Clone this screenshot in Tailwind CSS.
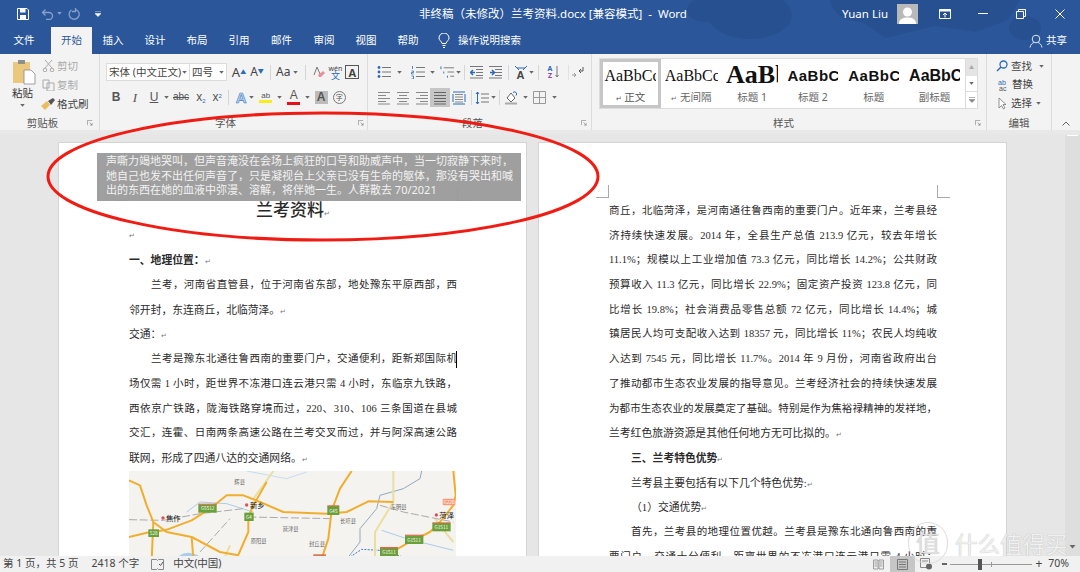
<!DOCTYPE html>
<html lang="zh">
<head>
<meta charset="utf-8">
<script src="https://cdn.jsdelivr.net/npm/@tailwindcss/browser@4"></script>
<title>Word</title>
</head>
<body class="m-0 overflow-hidden">
<svg class="hidden" width="0" height="0">
  <symbol id="dd" viewBox="0 0 6 4"><path d="M0 0h6L3 3.5z" fill="#666"/></symbol>
  <symbol id="launch" viewBox="0 0 7 7"><path d="M.5 6V.5H6M3 3l3 3M6 3.5V6H3.5" fill="none" stroke="#888" stroke-width=".8"/></symbol>
  <symbol id="bul" viewBox="0 0 14 14"><g fill="#2b6cb8"><circle cx="2" cy="2.5" r="1.4"/><circle cx="2" cy="7" r="1.4"/><circle cx="2" cy="11.5" r="1.4"/></g><path d="M5 2.5h9M5 7h9M5 11.5h9" stroke="#777" stroke-width="1"/></symbol>
  <symbol id="num" viewBox="0 0 14 14"><path d="M1.500 1v3M.5 6h2v1.500h-2v1.500h2M.5 11h2v3h-2" fill="none" stroke="#2b6cb8" stroke-width=".8"/><path d="M5 2.500h9M5 7h9M5 11.500h9" stroke="#777"/></symbol>
  <symbol id="mlist" viewBox="0 0 16 14"><path d="M1 1v3M4 6.500v2M8 11v2" stroke="#2b6cb8"/><path d="M4 2.500h11M8 7h7M11 11.500h4" stroke="#777"/></symbol>
  <symbol id="ind-l" viewBox="0 0 14 14"><path d="M0 1.500h13M6 4.500h7M6 7.500h7M6 10.500h7M0 13h13" stroke="#777"/><path d="M5 7.500H1M3 5L.5 7.500 3 10" fill="none" stroke="#2b6cb8" stroke-width="1.500"/></symbol>
  <symbol id="ind-r" viewBox="0 0 14 14"><path d="M0 1.500h13M6 4.500h7M6 7.500h7M6 10.500h7M0 13h13" stroke="#777"/><path d="M1 7.500h4M3 5l2.500 2.500L3 10" fill="none" stroke="#2b6cb8" stroke-width="1.500"/></symbol>
  <symbol id="al-l" viewBox="0 0 14 14"><path d="M1 1.500h12M1 4.500h8M1 7.500h12M1 10.500h8M1 13h12" stroke="#888"/></symbol>
  <symbol id="al-c" viewBox="0 0 14 14"><path d="M1 1.500h12M3 4.500h8M1 7.500h12M3 10.500h8M1 13h12" stroke="#888"/></symbol>
  <symbol id="al-r" viewBox="0 0 14 14"><path d="M1 1.500h12M5 4.500h8M1 7.500h12M5 10.500h8M1 13h12" stroke="#888"/></symbol>
  <symbol id="al-j" viewBox="0 0 14 14"><path d="M1 1.500h12M1 4.500h12M1 7.500h12M1 10.500h12M1 13h12" stroke="#666"/></symbol>
</svg>

<div class="relative flex h-[572px] w-[1080px] flex-col overflow-hidden bg-[#e6e6e6] font-['Noto_Sans','Noto_Sans_CJK_SC',sans-serif] text-[#444]">

  <!-- blue header -->
  <header class="relative h-[54px] shrink-0 overflow-hidden bg-[#2b579a] text-white">
    <svg class="absolute top-0 left-[680px]" width="400" height="54" viewBox="0 0 400 54"><g fill="#275090"><ellipse cx="25" cy="10" rx="18" ry="12"/><ellipse cx="70" cy="15" rx="42" ry="24"/><path d="M150 0h190l-12 20-32 12-42-6-48 12-24-16q-28-2-32-22z"/><ellipse cx="345" cy="28" rx="16" ry="12"/></g></svg>
    <!-- title bar -->
    <div class="relative flex h-[27px] items-center">
      <svg class="ml-[17px]" width="12" height="12" viewBox="0 0 12 12"><path d="M.5.500h9.500l1.500 1.500v9.500H.5z" fill="none" stroke="#fff"/><path d="M3 1h5.500v3.500H3zM3 7h6v4.500H3z" fill="#fff"/></svg>
      <svg class="ml-[12px]" width="13" height="12" viewBox="0 0 13 12"><path d="M4.500 1.500L1.500 4.500l3 3M1.500 4.500H8a3.500 3.500 0 0 1 0 7H5" fill="none" stroke="#86a1c9" stroke-width="1.300"/></svg>
      <svg class="ml-[3px]" width="5" height="3" viewBox="0 0 6 4"><path d="M0 0h6L3 3.500z" fill="#86a1c9"/></svg>
      <svg class="ml-[6px]" width="12" height="12" viewBox="0 0 12 12"><path d="M3.500 2A5 5 0 1 0 7 1.300M7.500 0v3.500H4" fill="none" stroke="#86a1c9" stroke-width="1.300"/></svg>
      <svg class="ml-[15px]" width="6" height="6" viewBox="0 0 6 6"><path d="M0 0h6M0 2.500h6L3 5.500z" stroke="#dfe7f2" stroke-width=".8" fill="#fff"/></svg>
      <span class="ml-[318px] text-[11.5px] whitespace-nowrap">非终稿（未修改）兰考资料.docx [兼容模式]&nbsp; -&nbsp; Word</span>
      <span class="ml-auto text-[11.5px]">Yuan Liu</span>
      <div class="ml-[9px] flex h-[20px] w-[21px] items-end justify-center overflow-hidden bg-[#b9b9b9]">
        <svg width="19" height="18" viewBox="0 0 19 18"><circle cx="9.500" cy="6" r="4.500" fill="#fff"/><path d="M1 18c0-5 4-6.500 8.500-6.500S18 13 18 18z" fill="#fff"/></svg>
      </div>
      <svg class="ml-[21px]" width="12" height="10" viewBox="0 0 12 10"><path d="M.5.500h11v9H.5z" fill="none" stroke="#fff"/><path d="M.5.500h11v2H.5z" fill="#fff"/><path d="M6 8.500V4M4 6l2-2 2 2" fill="none" stroke="#fff"/></svg>
      <span class="ml-[27px] h-px w-[10px] bg-white"></span>
      <svg class="ml-[28px]" width="10" height="10" viewBox="0 0 10 10"><path d="M.5 2.500h7v7h-7zM2.500 2.500v-2h7v7h-2" fill="none" stroke="#fff"/></svg>
      <svg class="mr-[15px] ml-[29px]" width="10" height="10" viewBox="0 0 10 10"><path d="M.5.500l9 9M9.500.500l-9 9" stroke="#fff"/></svg>
    </div>
    <!-- tabs -->
    <nav class="relative flex h-[27px] items-center text-[10.5px]">
      <span class="ml-[4px] w-[40px] text-center">文件</span>
      <span class="ml-[7px] flex h-full w-[41px] items-center justify-center bg-[#f3f3f3] text-[#2b579a]">开始</span>
      <span class="w-[42px] text-center">插入</span>
      <span class="w-[42px] text-center">设计</span>
      <span class="w-[42px] text-center">布局</span>
      <span class="w-[42px] text-center">引用</span>
      <span class="w-[43px] text-center">邮件</span>
      <span class="w-[42px] text-center">审阅</span>
      <span class="w-[42px] text-center">视图</span>
      <span class="w-[42px] text-center">帮助</span>
      <svg class="ml-[9px]" width="12" height="15" viewBox="0 0 12 15"><path d="M4 10.500C3.500 8 1 7.500 1 5a5 5 0 0 1 10 0c0 2.500-2.500 3-3 5.500zM4.500 12.500h3M5 14.500h2" fill="none" stroke="#fff"/></svg>
      <span class="ml-[8px]">操作说明搜索</span>
      <svg class="ml-auto" width="14" height="14" viewBox="0 0 14 14"><circle cx="7" cy="5" r="3.800" fill="none" stroke="#dfe7f2"/><path d="M1 13.500c.5-3 2.500-4.500 4-5M13 13.500c-.5-3-2.500-4.500-4-5" fill="none" stroke="#dfe7f2"/></svg>
      <span class="mr-[13px] ml-[3px]">共享</span>
    </nav>
  </header>

  <!-- ribbon -->
  <section class="flex h-[76px] shrink-0 bg-[#f3f3f3] text-[10.5px] leading-none">
    <!-- clipboard -->
    <div class="relative flex w-[100px] shrink-0 flex-col border-r border-[#dcdcdc]">
      <div class="flex h-[62px] pl-[12px]">
        <div class="flex w-[30px] flex-col items-start pt-[5px]">
          <svg width="25" height="26" viewBox="0 0 25 26"><path d="M1 3h17v21H1z" fill="#eac97e"/><path d="M6 1h7v4H6z" fill="#8f8f8f"/><path d="M12 11h7l4 4v10H12z" fill="#fff" stroke="#888" stroke-width=".8"/></svg>
          <span class="mt-[3px] text-[#333]">粘贴</span>
          <svg class="mt-[5px] ml-[8px]" width="5" height="3"><use href="#dd"/></svg>
        </div>
        <div class="flex flex-col gap-[7px] pt-[6px] text-[#aaa]">
          <span class="flex items-center gap-[2px]"><svg width="13" height="12" viewBox="0 0 13 12"><path d="M3 0l7 8M10 0L3 8" stroke="#aaa"/><circle cx="3" cy="10" r="1.800" fill="none" stroke="#aaa"/><circle cx="10" cy="10" r="1.800" fill="none" stroke="#aaa"/></svg>剪切</span>
          <span class="flex items-center gap-[2px]"><svg width="13" height="12" viewBox="0 0 13 12"><path d="M1 1h6v8H1zM5 4h7v8H5z" fill="#f3f3f3" stroke="#aaa"/></svg>复制</span>
          <span class="-ml-[1px] flex items-center gap-[2px] text-[#444]"><svg width="14" height="12" viewBox="0 0 14 12"><path d="M0 8l6-5 3 4-5 5z" fill="#e9bd62"/><path d="M7 3l5-3 2 2-4 5z" fill="#555"/></svg>格式刷</span>
        </div>
      </div>
      <div class="flex h-[14px] items-center justify-center pr-[14px] text-[#555]">剪贴板</div>
      <svg class="absolute right-[6px] bottom-[4px]" width="6" height="6"><use href="#launch"/></svg>
    </div>

    <!-- font -->
    <div class="relative flex w-[268px] shrink-0 flex-col border-r border-[#dcdcdc]">
      <div class="flex h-[62px] flex-col">
        <div class="mt-[9px] flex h-[18px] items-center pl-[6px]">
          <span class="flex h-[18px] w-[84px] items-center justify-between border border-[#dcdcdc] bg-white px-[2px] text-[#444]">宋体 (中文正文)<svg width="5" height="3"><use href="#dd"/></svg></span>
          <span class="-ml-px flex h-[18px] w-[38px] items-center justify-between border border-[#dcdcdc] bg-white px-[2px]">四号<svg width="5" height="3"><use href="#dd"/></svg></span>
          <span class="ml-[3px] w-[18px] text-center text-[13px]">A<sup class="text-[6px] text-[#2b6cb8]">▲</sup></span>
          <span class="w-[18px] text-center text-[12px]">A<sup class="text-[6px] text-[#2b6cb8]">▼</sup></span>
          <span class="ml-[4px] h-[15px] w-px bg-[#d5d5d5]"></span>
          <span class="ml-[5px] text-[12px]">Aa</span>
          <svg class="ml-[3px]" width="5" height="3"><use href="#dd"/></svg>
          <span class="ml-[7px] h-[15px] w-px bg-[#d5d5d5]"></span>
          <svg class="ml-[7px]" width="12" height="12" viewBox="0 0 12 12"><path d="M1 9L4 1l3 7" fill="none" stroke="#777"/><path d="M5 9l5-4 2 2-4 4H6z" fill="#ec8f9b"/></svg>
          <span class="ml-[3px] flex w-[14px] flex-col items-center text-[7px] leading-[7px] text-[#2b6cb8]"><span class="text-[#444]">wén</span><span class="text-[9px]">文</span></span>
          <span class="ml-[3px] flex h-[14px] w-[14px] items-center justify-center border border-[#555] text-[11px] font-bold">A</span>
        </div>
        <div class="mt-[7px] flex h-[18px] items-center pl-[11px] font-['Liberation_Sans',sans-serif] text-[12px] text-[#555]">
          <span class="w-[10px] text-center font-bold">B</span>
          <span class="ml-[9px] w-[10px] text-center font-['Liberation_Serif',serif] text-[13px] italic">I</span>
          <span class="ml-[9px] w-[10px] text-center underline">U</span>
          <svg class="ml-[5px]" width="5" height="3"><use href="#dd"/></svg>
          <span class="ml-[4px] text-[10px] line-through">abc</span>
          <span class="ml-[7px]">x<sub class="text-[6px] text-[#2b6cb8]">2</sub></span>
          <span class="ml-[7px]">x<sup class="text-[6px] text-[#2b6cb8]">2</sup></span>
          <span class="ml-[6px] h-[15px] w-px bg-[#d5d5d5]"></span>
          <span class="ml-[7px] text-[15px] font-bold text-[#b8d2ee] [-webkit-text-stroke:.6px_#3d7cc4]">A</span>
          <svg class="ml-[2px]" width="5" height="3"><use href="#dd"/></svg>
          <span class="ml-[5px] flex w-[14px] flex-col items-center text-[8px] leading-[9px]">ab<span class="h-[3px] w-[13px] bg-[#f6ee1c]"></span></span>
          <svg class="ml-[4px]" width="5" height="3"><use href="#dd"/></svg>
          <span class="ml-[5px] flex w-[14px] flex-col items-center text-[12px] leading-[11px]">A<span class="mt-[1px] h-[3px] w-[13px] bg-[#e8111a]"></span></span>
          <svg class="ml-[4px]" width="5" height="3"><use href="#dd"/></svg>
          <span class="ml-[5px] flex h-[13px] w-[13px] items-center justify-center bg-[#bcbcbc] font-bold">A</span>
          <span class="ml-[5px] flex h-[13px] w-[13px] items-center justify-center rounded-full border border-[#777] font-['Noto_Sans_CJK_SC',sans-serif] text-[7px]">字</span>
        </div>
      </div>
      <div class="flex h-[14px] items-center justify-center pr-[16px] text-[#555]">字体</div>
      <svg class="absolute right-[3px] bottom-[4px]" width="6" height="6"><use href="#launch"/></svg>
    </div>

    <!-- paragraph -->
    <div class="relative flex w-[224px] shrink-0 flex-col border-r border-[#dcdcdc]">
      <div class="flex h-[62px] flex-col">
        <div class="mt-[11px] flex h-[14px] items-center pl-[9px]">
          <svg width="14" height="14"><use href="#bul"/></svg>
          <svg class="ml-[6px]" width="5" height="3"><use href="#dd"/></svg>
          <svg class="ml-[9px]" width="14" height="14"><use href="#num"/></svg>
          <svg class="ml-[5px]" width="5" height="3"><use href="#dd"/></svg>
          <svg class="ml-[5px]" width="15" height="14"><use href="#mlist"/></svg>
          <svg class="ml-[1px]" width="5" height="3"><use href="#dd"/></svg>
          <span class="ml-[3px] h-[15px] w-px bg-[#d5d5d5]"></span>
          <svg class="ml-[5px]" width="14" height="14"><use href="#ind-l"/></svg>
          <svg class="ml-[5px]" width="14" height="14"><use href="#ind-r"/></svg>
          <span class="ml-[5px] h-[15px] w-px bg-[#d5d5d5]"></span>
          <svg class="ml-[5px]" width="14" height="14" viewBox="0 0 14 14"><path d="M3 3l8 0M1 1l4 4M13 1L9 5" stroke="#2b6cb8"/><text x="2.500" y="13.500" font-size="11" font-weight="700" fill="#444" font-family="Liberation Sans">A</text></svg>
          <svg class="ml-[1px]" width="5" height="3"><use href="#dd"/></svg>
          <span class="ml-[4px] h-[15px] w-px bg-[#d5d5d5]"></span>
          <span class="ml-[6px] flex w-[10px] flex-col items-center text-[7px] leading-[7px] font-bold"><span class="text-[#2b6cb8]">A</span><span class="text-[#8e44ad]">Z</span></span>
          <svg width="4" height="14" viewBox="0 0 4 14"><path d="M2 1v11M.5 10l1.500 2 1.500-2" fill="none" stroke="#777"/></svg>
          <span class="ml-[9px] h-[15px] w-px bg-[#e2e2e2]"></span>
          <svg class="ml-[2px]" width="14" height="12" viewBox="0 0 14 12"><path d="M12 1v4H8M8 5l2-2M8 5l2 2" fill="none" stroke="#555"/><path d="M1 9h4M3 7l2 2-2 2" fill="none" stroke="#999"/></svg>
        </div>
        <div class="mt-[9px] flex h-[19px] items-center pl-[9px]">
          <svg width="14" height="14"><use href="#al-l"/></svg>
          <svg class="ml-[5px]" width="14" height="14"><use href="#al-c"/></svg>
          <svg class="ml-[5px]" width="14" height="14"><use href="#al-r"/></svg>
          <span class="ml-[1px] flex h-[19px] w-[20px] items-center justify-center bg-[#c6c6c6]"><svg width="14" height="14"><use href="#al-j"/></svg></span>
          <svg class="ml-[2px]" width="14" height="14" viewBox="0 0 14 14"><path d="M1 1h12M1 13h12" stroke="#2b6cb8"/><path d="M3 3.500h8M3 6h8M3 8.500h8M3 11h8" stroke="#888"/><path d="M1 3v8M13 3v8" stroke="#2b6cb8"/></svg>
          <span class="ml-[5px] h-[15px] w-px bg-[#d5d5d5]"></span>
          <svg class="ml-[3px]" width="14" height="14" viewBox="0 0 14 14"><path d="M2.500 1v12M1 3l1.500-2L4 3M1 11l1.500 2L4 11" fill="none" stroke="#2b6cb8"/><path d="M6 3h8M6 7h8M6 11h8" stroke="#777"/></svg>
          <svg class="ml-[2px]" width="5" height="3"><use href="#dd"/></svg>
          <span class="ml-[3px] h-[15px] w-px bg-[#d5d5d5]"></span>
          <svg class="ml-[4px]" width="14" height="14" viewBox="0 0 14 14"><path d="M3 7l4-5 4 5-4 4z" fill="#fff" stroke="#666"/><path d="M9 1.500a2 2 0 0 1 3 3" fill="none" stroke="#2b6cb8"/><path d="M1 12.500h12" stroke="#aaa" stroke-width="2"/></svg>
          <svg class="ml-[5px]" width="5" height="3"><use href="#dd"/></svg>
          <svg class="ml-[5px]" width="13" height="13" viewBox="0 0 13 13"><path d="M.5.500h12v12H.5zM6.500.500v12M.5 6.500h12" fill="none" stroke="#999"/></svg>
          <svg class="ml-[6px]" width="5" height="3"><use href="#dd"/></svg>
        </div>
      </div>
      <div class="flex h-[14px] items-center justify-center pr-[14px] text-[#555]">段落</div>
      <svg class="absolute right-[4px] bottom-[4px]" width="6" height="6"><use href="#launch"/></svg>
    </div>

    <!-- styles -->
    <div class="relative flex w-[395px] shrink-0 flex-col border-r border-[#dcdcdc] pl-[7px]">
      <div class="mt-[4px] flex h-[51px] w-[379px] border border-[#dcdcdc] bg-white">
        <div class="flex w-[61px] flex-col items-center overflow-hidden border-[3px] border-[#c6c6c6] pt-[4px]">
          <span class="h-[20px] w-[52px] overflow-hidden font-['Liberation_Serif',serif] text-[16px] leading-[20px] whitespace-nowrap text-[#111]">AaBbCc</span>
          <span class="mt-[6px] text-[#555]"><span class="text-[7px]">↵</span> 正文</span>
        </div>
        <div class="flex w-[61px] flex-col items-center overflow-hidden pt-[7px]">
          <span class="h-[20px] w-[53px] overflow-hidden font-['Liberation_Serif',serif] text-[16px] leading-[20px] whitespace-nowrap text-[#111]">AaBbCc</span>
          <span class="mt-[6px] text-[#666]"><span class="text-[7px]">↵</span> 无间隔</span>
        </div>
        <div class="flex w-[61px] flex-col items-center overflow-hidden pt-[4px]">
          <span class="h-[23px] w-[52px] overflow-hidden font-['Liberation_Serif',serif] text-[26px] leading-[23px] font-bold whitespace-nowrap text-[#111]">AaBbCc</span>
          <span class="mt-[6px] text-[#666]">标题 1</span>
        </div>
        <div class="flex w-[61px] flex-col items-center overflow-hidden pt-[7px]">
          <span class="h-[20px] w-[51px] overflow-hidden font-['Liberation_Sans',sans-serif] text-[15px] leading-[20px] font-bold tracking-[0.5px] whitespace-nowrap text-[#111]">AaBbCc</span>
          <span class="mt-[6px] text-[#666]">标题 2</span>
        </div>
        <div class="flex w-[61px] flex-col items-center overflow-hidden pt-[7px]">
          <span class="h-[20px] w-[51px] overflow-hidden font-['Liberation_Sans',sans-serif] text-[15px] leading-[20px] font-bold tracking-[0.5px] whitespace-nowrap text-[#111]">AaBbCc</span>
          <span class="mt-[6px] text-[#666]">标题</span>
        </div>
        <div class="flex w-[61px] flex-col items-center overflow-hidden pt-[7px]">
          <span class="h-[20px] w-[51px] overflow-hidden font-['Liberation_Sans',sans-serif] text-[16px] leading-[20px] font-bold whitespace-nowrap text-[#111]">AaBbCc</span>
          <span class="mt-[6px] text-[#666]">副标题</span>
        </div>
        <div class="ml-auto flex w-[12px] flex-col border-l border-[#dcdcdc]">
          <span class="flex h-[17px] items-center justify-center bg-[#e4e4e4] text-[5px] text-[#aaa]">▲</span>
          <span class="flex h-[16px] items-center justify-center border-b border-[#dcdcdc]"><svg width="5" height="3"><use href="#dd"/></svg></span>
          <span class="flex flex-1 items-center justify-center"><svg width="6" height="6" viewBox="0 0 6 6"><path d="M0 .5h6M0 2.500h6L3 5.500z" stroke="#888" stroke-width=".6" fill="#888"/></svg></span>
        </div>
      </div>
      <div class="mt-[7px] flex h-[14px] items-center justify-center pr-[18px] text-[#555]">样式</div>
      <svg class="absolute right-[5px] bottom-[4px]" width="6" height="6"><use href="#launch"/></svg>
    </div>

    <!-- editing -->
    <div class="flex w-[65px] shrink-0 flex-col border-r border-[#dcdcdc]">
      <div class="flex h-[62px] flex-col gap-[6.500px] pt-[6px] pl-[9px]">
        <span class="flex items-center gap-[3px]"><svg width="12" height="12" viewBox="0 0 12 12"><circle cx="7.500" cy="4.500" r="3.500" fill="none" stroke="#2b6cb8" stroke-width="1.300"/><path d="M5 7L1 11" stroke="#2b6cb8" stroke-width="1.500"/></svg>查找<svg class="ml-[4px]" width="5" height="3"><use href="#dd"/></svg></span>
        <span class="flex items-center gap-[3px]"><svg width="13" height="12" viewBox="0 0 13 12"><text x="2" y="5.500" font-size="7" fill="#2b6cb8" font-family="Liberation Sans">ab</text><text x="3" y="11.500" font-size="7" fill="#555" font-family="Liberation Sans">ac</text></svg>替换</span>
        <span class="flex items-center gap-[3px]"><svg width="12" height="13" viewBox="0 0 12 13"><path d="M3 1v10l2.500-2.500 2 3.500 1.500-1-2-3.500H10z" fill="#fff" stroke="#777" stroke-width=".8"/></svg>选择<svg class="ml-[1px]" width="5" height="3"><use href="#dd"/></svg></span>
      </div>
      <div class="flex h-[14px] items-center justify-center text-[#555]">编辑</div>
    </div>
    <div class="flex flex-1 items-end justify-center pb-[4px]"><svg width="8" height="5" viewBox="0 0 8 5"><path d="M.5 4.500L4 1l3.500 3.500" fill="none" stroke="#666"/></svg></div>
  </section>

  <!-- document -->
  <main class="relative flex min-h-0 flex-1 overflow-hidden border-t-[5px] border-t-[#e8e8e8] bg-[#e6e6e6] pt-[7px] pl-[58px] font-['Liberation_Serif','Noto_Sans_CJK_SC',serif] text-[10.8px] leading-[24.7px] text-[#2a2a2a]">
    <article class="relative h-[600px] w-[469px] shrink-0 border border-[#d4d4d4] bg-white pt-[56px] pr-[69px] pl-[70px] [&>div]:h-[24.7px]">
      <span class="absolute top-[45px] left-[57px] h-[13px] w-[13px] border-r border-b border-[#aaa]"></span>
      <span class="absolute top-[45px] right-[56px] h-[13px] w-[13px] border-b border-l border-[#aaa]"></span>
      <div class="text-center text-[17px] font-medium">兰考资料<span class="text-[7px] font-normal text-[#777]">↵</span></div>
      <div class="text-[7px] text-[#777]">↵</div>
      <div class="font-bold">一、地理位置：<span class="text-[7px] font-normal text-[#777]">↵</span></div>
      <div class="pl-[22px] text-justify text-[10.5px] [text-align-last:justify]">兰考，河南省直管县，位于河南省东部，地处豫东平原西部，西</div>
      <div>邻开封，东连商丘，北临菏泽。<span class="text-[7px] text-[#777]">↵</span></div>
      <div>交通：<span class="text-[7px] text-[#777]">↵</span></div>
      <div class="relative pl-[22px] text-justify text-[10.5px] [text-align-last:justify]">兰考是豫东北通往鲁西南的重要门户，交通便利，距新郑国际机<span class="absolute top-[4px] right-0 h-[17px] w-px bg-black"></span></div>
      <div class="text-justify text-[10.5px] [text-align-last:justify]">场仅需 1 小时，距世界不冻港口连云港只需 4 小时，东临京九铁路，</div>
      <div class="text-justify text-[10.5px] [text-align-last:justify]">西依京广铁路，陇海铁路穿境而过，220、310、106 三条国道在县城</div>
      <div class="text-justify text-[10.5px] [text-align-last:justify]">交汇，连霍、日南两条高速公路在兰考交叉而过，并与阿深高速公路</div>
      <div>联网，形成了四通八达的交通网络。<span class="text-[7px] text-[#777]">↵</span></div>
      <svg class="block font-['Noto_Sans_CJK_SC',sans-serif]" width="327" height="93" viewBox="27 27 981 279">
        <rect x="27" y="27" width="981" height="279" fill="#f4f3ef"/>
        <g fill="none" stroke="#a9cdeb" stroke-width="3"><path d="M200 150L240 120L320 125L400 150M785 205L860 230L1000 265"/><path d="M170 295Q200 260 250 295" stroke-width="10" fill="#b9d7ef"/><path d="M380 27L500 50L560 30" stroke="#c6dcee"/></g>
        <path d="M905 27L900 50L850 80L780 100L770 140L720 200L720 240L685 285" fill="none" stroke="#93a8bd" stroke-width="3"/>
        <path d="M690 285L725 262L780 265L850 285" fill="none" stroke="#3c78d8" stroke-width="3" stroke-dasharray="6 4"/>
        <g fill="none" stroke="#e8dfa0" stroke-width="6"><path d="M460 27L430 70L400 110M820 27L820 120L765 210L765 290M945 170L975 210L1000 240M330 250L310 295"/></g>
        <g fill="none" stroke="#aaa" stroke-width="3" stroke-dasharray="24 8"><path d="M27 173L130 175L240 155L370 140M385 165L640 170M780 130L850 150L1000 180M240 270L330 170"/></g>
        <g fill="none" stroke="#f1ae2e" stroke-width="6" stroke-linejoin="round"><path d="M27 55L60 70L80 130L100 180L140 210L215 225L300 270L355 280"/><path d="M135 205L215 175L270 140L320 100L370 100L420 120L490 150L620 155L680 150L745 118L820 120"/><path d="M440 60L400 130L385 165L385 210L350 290"/><path d="M695 27L660 80L635 145L625 230L605 290"/><path d="M1000 27L1007 100L1000 130L960 180L930 210L860 245L800 280"/><path d="M27 225L90 210L135 205M100 180L95 295M215 225L220 290"/></g>
        <g fill="#6a9f3a"><rect x="235" y="127" width="55" height="25"/><rect x="373" y="152" width="28" height="25"/><rect x="622" y="132" width="36" height="27"/><rect x="85" y="202" width="32" height="23"/><rect x="855" y="220" width="55" height="26"/><rect x="937" y="183" width="55" height="25"/><rect x="780" y="258" width="54" height="25"/><rect x="580" y="280" width="38" height="20"/></g>
        <g fill="#e8624a"><rect x="235" y="125" width="55" height="3"/><rect x="622" y="130" width="36" height="3"/><rect x="855" y="218" width="55" height="3"/><rect x="937" y="181" width="55" height="3"/><rect x="780" y="255" width="54" height="4"/><rect x="580" y="277" width="38" height="4"/></g>
        <rect x="968" y="110" width="38" height="20" rx="3" fill="#f59b7c"/>
        <g font-size="14" fill="#fff" text-anchor="middle"><text x="263" y="145">G5512</text><text x="387" y="170">G4</text><text x="640" y="152">G45</text><text x="101" y="218">S28</text><text x="882" y="239">G1511</text><text x="964" y="201">G1511</text><text x="807" y="276">G1511</text><text x="987" y="125">G220</text></g>
        <g fill="#e0505c"><circle cx="129" cy="168" r="5"/><circle cx="380" cy="129" r="5"/><circle cx="949" cy="159" r="5"/></g>
        <g font-size="22" fill="#111"><text x="138" y="177">焦作</text><text x="390" y="138">新乡</text><text x="958" y="168">菏泽</text></g>
        <g font-size="16" fill="#666"><text x="343" y="66">辉县</text><text x="660" y="182">长垣县</text><text x="488" y="208">延津县</text><text x="392" y="242">原阳县</text><text x="567" y="253">封丘县</text><text x="812" y="142">东明县</text></g>
      </svg>
    </article>

    <article class="relative ml-[11px] h-[600px] w-[469px] shrink-0 border border-[#d4d4d4] bg-white pt-[56px] pr-[69px] pl-[70px] [&>div]:h-[24.7px]">
      <span class="absolute top-[42px] left-[57px] h-[13px] w-[13px] border-r border-b border-[#aaa]"></span>
      <span class="absolute top-[42px] right-[56px] h-[13px] w-[13px] border-b border-l border-[#aaa]"></span>
      <div class="text-justify text-[10.5px] [text-align-last:justify]">商丘，北临菏泽，是河南通往鲁西南的重要门户。近年来，兰考县经</div>
      <div class="text-justify text-[10.5px] [text-align-last:justify]">济持续快速发展。2014 年，全县生产总值 213.9 亿元，较去年增长</div>
      <div class="text-justify text-[10.5px] [text-align-last:justify]">11.1%；规模以上工业增加值 73.3 亿元，同比增长 14.2%；公共财政</div>
      <div class="text-justify text-[10.5px] [text-align-last:justify]">预算收入 11.3 亿元，同比增长 22.9%；固定资产投资 123.8 亿元，同</div>
      <div class="text-justify text-[10.5px] [text-align-last:justify]">比增长 19.8%；社会消费品零售总额 72 亿元，同比增长 14.4%；城</div>
      <div class="text-justify text-[10.5px] [text-align-last:justify]">镇居民人均可支配收入达到 18357 元，同比增长 11%；农民人均纯收</div>
      <div class="text-justify text-[10.5px] [text-align-last:justify]">入达到 7545 元，同比增长 11.7%。2014 年 9 月份，河南省政府出台</div>
      <div class="text-justify text-[10.5px] [text-align-last:justify]">了推动都市生态农业发展的指导意见。兰考经济社会的持续快速发展</div>
      <div class="text-justify text-[10.5px] [text-align-last:justify]">为都市生态农业的发展奠定了基础。特别是作为焦裕禄精神的发祥地，</div>
      <div>兰考红色旅游资源是其他任何地方无可比拟的。<span class="text-[7px] text-[#777]">↵</span></div>
      <div class="pl-[22px] font-bold">三、兰考特色优势<span class="text-[7px] font-normal text-[#777]">↵</span></div>
      <div class="pl-[22px]">兰考县主要包括有以下几个特色优势:<span class="text-[7px] text-[#777]">↵</span></div>
      <div class="pl-[22px]">（1）交通优势<span class="text-[7px] text-[#777]">↵</span></div>
      <div class="pl-[22px] text-justify text-[10.5px] [text-align-last:justify]">首先，兰考县的地理位置优越。兰考县是豫东北通向鲁西南的重</div>
      <div class="text-justify text-[10.5px] [text-align-last:justify]">要门户，交通十分便利，距离世界的不冻港口连云港只需 4 小时；</div>
    </article>

    <aside class="absolute top-0 right-0 h-full w-[15px] bg-[#dedede]">
      <span class="mx-auto mt-[-4px] block h-[5px] w-[11px] bg-white"></span>
    </aside>
  </main>

  <!-- status bar -->
  <footer class="relative flex h-[16px] shrink-0 items-center bg-[#f1f1f1] text-[10.5px] text-[#444]">
    <span class="ml-[3px]">第 1 页，共 5 页</span>
    <span class="ml-[13px]">2418 个字</span>
    <svg class="ml-[12px]" width="13" height="11" viewBox="0 0 13 11"><path d="M.5.500h5l1 1 1-1h5v10h-5l-1-1-1 1h-5z" fill="none" stroke="#888"/><path d="M8 5l1.500 1.500L12 3" fill="none" stroke="#555"/></svg>
    <span class="ml-[9px]">中文(中国)</span>
    <svg class="ml-auto" width="11" height="11" viewBox="0 0 11 11"><path d="M.5 1h4.500v9H.5zM6 1h4.500v9H6zM1.500 3h2.500M1.500 5h2.500M1.500 7h2.500M7 3h2.500M7 5h2.500M7 7h2.500" fill="none" stroke="#888" stroke-width=".8"/></svg>
    <span class="ml-[6px] flex h-[16px] w-[25px] items-center justify-center bg-[#c6c6c6]"><svg width="11" height="11" viewBox="0 0 11 11"><path d="M.5.500h10v10H.5zM2 3h7M2 5.500h7M2 8h7" fill="none" stroke="#777"/></svg></span>
    <svg class="ml-[5px]" width="13" height="12" viewBox="0 0 13 12"><path d="M.5.500h9v9H.5zM2 3h6" fill="none" stroke="#888"/><circle cx="9" cy="8.500" r="3" fill="#666"/></svg>
    <span class="ml-[9px] h-[1.500px] w-[5px] bg-[#666]"></span>
    <span class="relative ml-[3px] h-px w-[82px] bg-[#999]"><span class="absolute top-[-5px] left-[28px] h-[11px] w-[4px] bg-[#555]"></span><span class="absolute top-[-2px] left-[41px] h-[5px] w-px bg-[#999]"></span></span>
    <span class="ml-[3px] text-[12px] leading-none">+</span>
    <span class="mr-[11px] ml-[6px]">70%</span>
  </footer>

  <!-- grey caption over the page -->
  <div class="absolute top-[153px] left-[97px] h-[48px] w-[424px] bg-[#9a9a9a]/95 pt-[1px] pl-[9px] text-[11px] leading-[14.7px] whitespace-nowrap text-[#f2f2f2]">
    声嘶力竭地哭叫，但声音淹没在会场上疯狂的口号和助威声中，当一切寂静下来时，<br>她自己也发不出任何声音了，只是凝视台上父亲已没有生命的躯体，那没有哭出和喊<br>出的东西在她的血液中弥漫、溶解，将伴她一生。人群散去 70/2021
  </div>

  <!-- red hand-drawn ellipse -->
  <svg class="pointer-events-none absolute top-0 left-0" width="1080" height="572"><ellipse cx="323" cy="176.500" rx="275" ry="63.500" fill="none" stroke="#f01c14" stroke-width="3"/></svg>

  <!-- watermark -->
  <div class="pointer-events-none absolute top-[522px] left-[908px] flex h-[42px] w-[40px] items-center justify-center rounded-full border-[1.500px] border-[#dcdcdc] text-[24px] text-[#e0e0e0] [text-shadow:0_0_1px_#bbb]">值</div>
  <div class="pointer-events-none absolute top-[526px] left-[955px] text-[22.500px] leading-[38px] whitespace-nowrap text-[#f0f0f0] [text-shadow:0_0_1px_#aaa]">什么值得买</div>
  <svg class="absolute top-[545px] left-[1069px]" width="7" height="4"><use href="#dd"/></svg>
</div>
</body>
</html>
